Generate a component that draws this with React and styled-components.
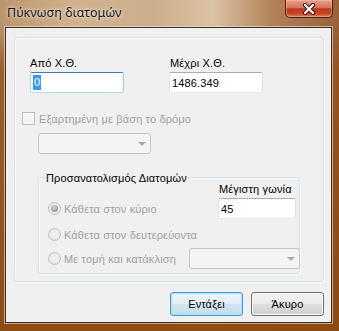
import React from "react";
import styled, { createGlobalStyle } from "styled-components";

const Global = createGlobalStyle`
  html, body { margin: 0; padding: 0; background: #fff; overflow: hidden; }
  #root { width: 339px; height: 331px; }
`;

const UI = `"Liberation Sans", "DejaVu Sans", Arial, sans-serif`;

const Window = styled.div`
  width: 339px;
  height: 331px;
  box-sizing: border-box;
  display: flex;
  flex-direction: column;
  padding-bottom: 8px;
  font-family: ${UI};
  font-size: 11px;
  letter-spacing: 0.15px;
  background:
    linear-gradient(180deg, rgba(140, 74, 20, 0) 0px, rgba(140, 74, 20, 0) 24px, rgba(150, 80, 24, 0.8) 70px, rgba(140, 72, 14, 0.95) 100%),
    linear-gradient(90deg, #bb946c 0%, #d1b28f 22%, #cbae8c 45%, #dbc2a3 63%, #b3815a 80%, #98623a 100%);
`;

const TitleBar = styled.div`
  height: 27px;
  flex: none;
  display: flex;
  justify-content: space-between;
  align-items: flex-start;
  padding: 0 6px 0 7px;
  box-sizing: border-box;
`;

const Title = styled.div`
  margin-top: 5px;
  font-family: "Noto Sans", "Liberation Sans", sans-serif;
  font-size: 12.5px;
  line-height: 16px;
  letter-spacing: 0;
  color: #111;
  text-shadow: 0 0 5px rgba(255, 255, 255, 0.85), 0 0 2px rgba(255, 255, 255, 0.7);
`;

const CloseButton = styled.div`
  width: 48px;
  height: 18px;
  box-sizing: border-box;
  border: 1px solid #4b2116;
  border-top: none;
  border-radius: 0 0 5px 5px;
  background: linear-gradient(180deg, #e6a08a 0%, #d7755a 44%, #bb3919 52%, #c24323 78%, #de845a 100%);
  box-shadow: inset 0 0 0 1px rgba(255, 220, 200, 0.35);
  display: flex;
  align-items: center;
  justify-content: center;
`;

const Client = styled.div`
  flex: 1;
  margin: 0 7px 0 5px;
  border: 1px solid #3d3026;
  box-shadow: 0 0 0 1px rgba(255, 240, 225, 0.55);
  background: #f0f0f0;
  display: flex;
  flex-direction: column;
  padding: 9px 7px 6px 8px;
`;

const Panel = styled.div`
  height: 245px;
  box-sizing: border-box;
  border: 1px solid #d5dfe5;
  border-radius: 3px;
  box-shadow: inset 1px 1px 0 #fff, 1px 1px 0 #fff;
  padding-left: 7px;
  display: flex;
  flex-direction: column;
  align-items: flex-start;
`;

const RangeRow = styled.div`
  margin-top: 19px;
  margin-left: 8px;
  display: flex;
  gap: 45px;
`;

const Field = styled.div`
  display: flex;
  flex-direction: column;
`;

const Label = styled.div`
  height: 13px;
  line-height: 13px;
  margin-bottom: 2px;
  padding-left: ${(p) => p.$indent || 0}px;
  color: ${(p) => (p.$disabled ? "#a0a0a0" : "#000")};
  white-space: nowrap;
`;

const TextBox = styled.div`
  width: ${(p) => p.$w}px;
  height: 21px;
  box-sizing: border-box;
  border: 1px solid;
  border-color: ${(p) =>
    p.$focused ? "#3d7bad #a4c9e3 #b7d9ed #b5cfe7" : "#abadb3 #dbdfe6 #e3e9ef #e2e3ea"};
  border-radius: 2px;
  background: #fff;
  padding: 0 2px;
  display: flex;
  align-items: center;
  color: #000;
  margin-right: ${(p) => p.$mr || 0}px;
`;

const Selected = styled.span`
  background: #3399ff;
  color: #fff;
  line-height: 15px;
  padding: 0 1px;
`;

const CheckRow = styled.div`
  margin-top: 19px;
  height: 13px;
  display: flex;
  align-items: center;
  gap: 4px;
  color: #a0a0a0;
  white-space: nowrap;
`;

const CheckBox = styled.div`
  width: 13px;
  height: 13px;
  box-sizing: border-box;
  border: 1px solid #bcbcbc;
  background: #f4f4f4;
  box-shadow: inset 0 0 0 1px #fbfbfb;
`;

const Combo = styled.div`
  width: ${(p) => p.$w}px;
  height: 21px;
  box-sizing: border-box;
  border: 1px solid #c4c4c4;
  border-radius: 3px;
  background: #f4f4f4;
  display: flex;
  align-items: center;
  justify-content: flex-end;
  padding-right: 4px;
  margin-top: ${(p) => p.$mt || 0}px;
  margin-left: ${(p) => (p.$auto ? "auto" : `${p.$ml || 0}px`)};
  margin-right: ${(p) => p.$mr || 0}px;
`;

const Arrow = styled.div`
  width: 0;
  height: 0;
  border-left: 4px solid transparent;
  border-right: 4px solid transparent;
  border-top: 4px solid #a9a9a9;
`;

const Group = styled.div`
  position: relative;
  margin-top: 23px;
  margin-left: 16px;
  width: 262px;
  height: 97px;
  box-sizing: border-box;
  border: 1px solid #d5dfe5;
  border-radius: 3px;
  box-shadow: inset 1px 1px 0 #fff, 1px 1px 0 #fff;
  padding: 5px 0 3px 9px;
  display: flex;
  flex-direction: column;
`;

const GroupTitle = styled.div`
  position: absolute;
  top: -6px;
  left: 6px;
  padding: 0 1px;
  line-height: 13px;
  background: #f0f0f0;
  color: #000;
  white-space: nowrap;
`;

const TopSection = styled.div`
  display: flex;
  justify-content: space-between;
  align-items: flex-end;
`;

const RadioRow = styled.div`
  height: 21px;
  display: flex;
  align-items: center;
  gap: 3px;
  color: #a0a0a0;
  white-space: nowrap;
  margin-top: ${(p) => p.$mt || 0}px;
`;

const Radio = styled.div`
  width: 13px;
  height: 13px;
  flex: none;
  box-sizing: border-box;
  border-radius: 50%;
  border: 1px solid #c2c2c2;
  background: radial-gradient(circle at 50% 50%, #f2f2f2 0%, #e4e4e4 100%);
  display: flex;
  align-items: center;
  justify-content: center;
  &::after {
    content: "";
    display: ${(p) => (p.$checked ? "block" : "none")};
    width: 7px;
    height: 7px;
    border-radius: 50%;
    background: radial-gradient(circle at 40% 35%, #d4d4d4 0%, #a2a2a2 60%, #8e8e8e 100%);
  }
`;

const ButtonRow = styled.div`
  margin-top: 10px;
  display: flex;
  justify-content: flex-end;
  gap: 8px;
`;

const Button = styled.div`
  width: 73px;
  height: 24px;
  box-sizing: border-box;
  border: 1px solid ${(p) => (p.$default ? "#3f9bd3" : "#707070")};
  border-radius: 3px;
  display: flex;
  align-items: center;
  justify-content: center;
  color: #000;
  background: ${(p) =>
    p.$default
      ? "linear-gradient(180deg, #eef5fa 0%, #e4eef5 48%, #d3e4ef 52%, #c5dcea 100%)"
      : "linear-gradient(180deg, #f2f2f2 0%, #ebebeb 48%, #dddddd 52%, #cfcfcf 100%)"};
  box-shadow: inset 0 0 0 1px ${(p) => (p.$default ? "#a9e1fb" : "#fbfbfb")};
`;

export default function App() {
  return (
    <>
      <Global />
      <Window>
        <TitleBar>
          <Title>Πύκνωση διατομών</Title>
          <CloseButton>
            <svg width="14" height="12" viewBox="0 0 14 12">
              <path d="M3 2 L11 10 M11 2 L3 10" stroke="#3a1a12" strokeWidth="4.2" strokeLinecap="round" />
              <path d="M3 2 L11 10 M11 2 L3 10" stroke="#ffffff" strokeWidth="2.2" strokeLinecap="round" />
            </svg>
          </CloseButton>
        </TitleBar>
        <Client>
          <Panel>
            <RangeRow>
              <Field>
                <Label>Από Χ.Θ.</Label>
                <TextBox $w={94} $focused>
                  <Selected>0</Selected>
                </TextBox>
              </Field>
              <Field>
                <Label $indent={1}>Μέχρι Χ.Θ.</Label>
                <TextBox $w={94}>1486.349</TextBox>
              </Field>
            </RangeRow>
            <CheckRow>
              <CheckBox />
              Εξαρτημένη με βάση το δρόμο
            </CheckRow>
            <Combo $w={113} $mt={8} $ml={16}>
              <Arrow />
            </Combo>
            <Group>
              <GroupTitle>Προσανατολισμός Διατομών</GroupTitle>
              <TopSection>
                <RadioRow>
                  <Radio $checked />
                  Κάθετα στον κύριο
                </RadioRow>
                <Field>
                  <Label $indent={1}>Μέγιστη γωνία</Label>
                  <TextBox $w={78} $mr={3}>45</TextBox>
                </Field>
              </TopSection>
              <RadioRow $mt={5}>
                <Radio />
                Κάθετα στον δευτερεύοντα
              </RadioRow>
              <RadioRow $mt={3}>
                <Radio />
                Με τομή και κατάκλιση
                <Combo $w={111} $auto $mr={-1}>
                  <Arrow />
                </Combo>
              </RadioRow>
            </Group>
          </Panel>
          <ButtonRow>
            <Button $default>Εντάξει</Button>
            <Button>Άκυρο</Button>
          </ButtonRow>
        </Client>
      </Window>
    </>
  );
}
